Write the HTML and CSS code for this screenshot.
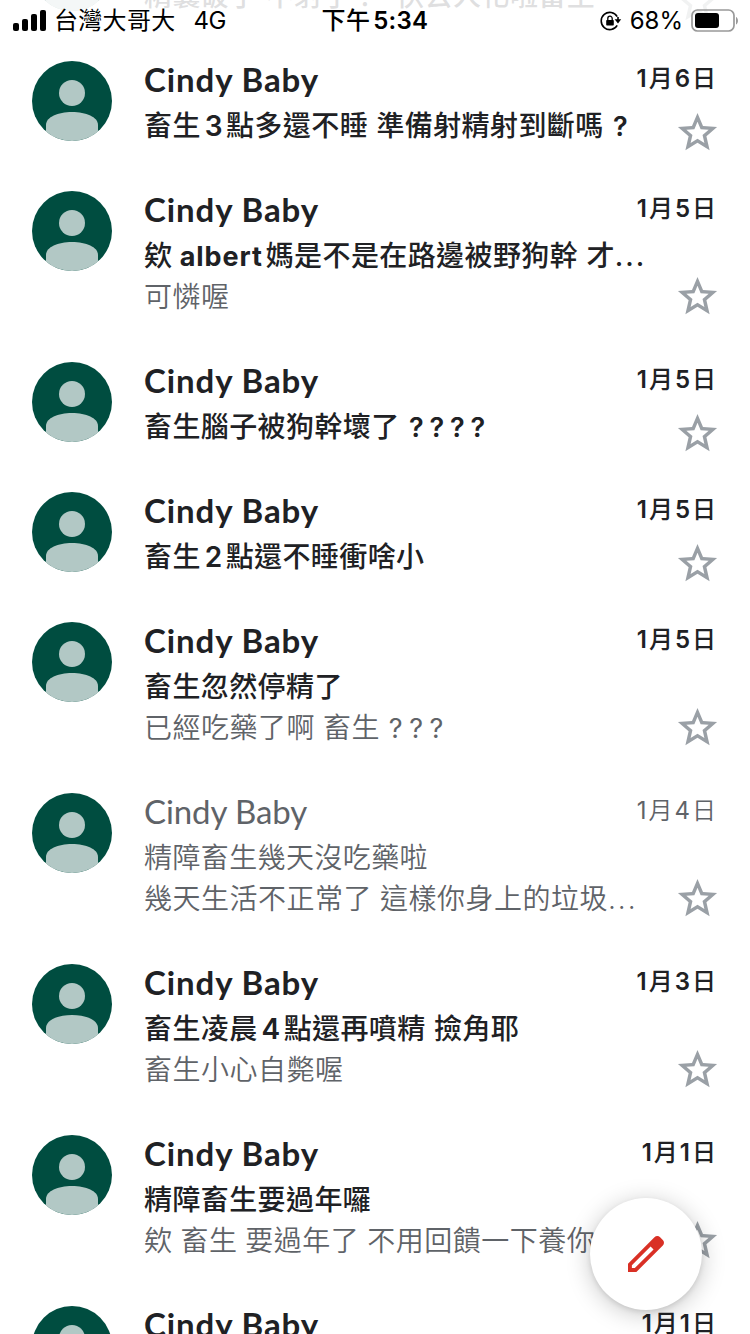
FILE: index.html
```
<!DOCTYPE html>
<html lang="zh-TW">

<head>
	<meta charset="utf-8">
	<title>收件匣</title>
	<link rel="stylesheet" href="styles.css">
</head>

<body>
	<svg width="0" height="0" class="defs">
		<symbol id="star" viewBox="0 0 24 24">
			<path fill-rule="evenodd" d="M22 9.240l-7.190-.62L12 2 9.190 8.630 2 9.240l5.460 4.730L5.820 21 12 17.270 18.180 21l-1.630-7.030zM12 6.500L13.600 10.300 17.700 10.640 14.580 13.330 15.520 17.350 12 15.200 8.480 17.350 9.420 13.330 6.300 10.640 10.400 10.300z" />
		</symbol>
		<symbol id="person" viewBox="0 0 80 80">
			<circle cx="40" cy="40" r="40" fill="#004d40" />
			<circle cx="40" cy="32" r="13" fill="#b2c8c5" />
			<path d="M14 70.400V64c0-8 12-13 26-13s26 5 26 13v6.400A40 40 0 0 1 14 70.400z" fill="#b2c8c5" />
		</symbol>
	</svg>

	<!-- 狀態列 -->
	<div class="status">
		<div class="left">
			<svg class="signal" width="34" height="22" viewBox="0 0 34 22">
				<rect x="0" y="13" width="6" height="8" rx="2" />
				<rect x="9" y="9" width="6" height="12" rx="2" />
				<rect x="18" y="4" width="6" height="17" rx="2" />
				<rect x="27" y="0" width="6" height="21" rx="2" />
			</svg>
			<span class="carrier">台灣大哥大</span>
			<span class="net">4G</span>
		</div>
		<div class="time">下午<span>5:34</span></div>
		<div class="right">
			<svg class="lock" width="22" height="20" viewBox="0 0 22 20">
				<path d="M17.200 5.600A8.600 8.600 0 1 0 17.200 14.400" fill="none" stroke="#000" stroke-width="1.600" />
				<path d="M18 6v4" stroke="#000" stroke-width="1.600" />
				<path d="M14.600 8.200h6.600L18 12.400z" />
				<rect x="6.200" y="9" width="7.600" height="5.600" rx="0.8" />
				<path d="M7.800 9.400V7.400a2.200 2.200 0 0 1 4.400 0v2" fill="none" stroke="#000" stroke-width="1.300" />
			</svg>
			<span class="percent">68%</span>
			<svg class="battery" width="48" height="24" viewBox="0 0 48 24">
				<rect x="1" y="1" width="42" height="21" rx="5.500" fill="none" stroke="#999" stroke-width="1.700" />
				<rect x="4" y="4" width="24" height="15" rx="3" />
				<path d="M45 8c2.600 1 2.600 6.500 0 7.500z" fill="#999" />
			</svg>
		</div>
	</div>

	<!-- 郵件列表 -->
	<div class="list">
		<div class="mail">
			<svg class="avatar"><use href="#person" /></svg>
			<div class="text">
				<div class="name"></div>
				<div class="subject">精囊破了 不射了？&nbsp; 快去人化啦畜生</div>
			</div>
			<div class="side">
				<div class="date"></div>
				<svg class="star"><use href="#star" /></svg>
			</div>
		</div>
		<div class="mail">
			<svg class="avatar"><use href="#person" /></svg>
			<div class="text">
				<div class="name">Cindy Baby</div>
				<div class="subject">畜生<b>3</b>點多還不睡 準備射精射到斷嗎 <b class="mark">?</b></div>
			</div>
			<div class="side">
				<div class="date"><b>1</b>月<b>6</b>日</div>
				<svg class="star"><use href="#star" /></svg>
			</div>
		</div>
		<div class="mail long">
			<svg class="avatar"><use href="#person" /></svg>
			<div class="text">
				<div class="name">Cindy Baby</div>
				<div class="subject">欸 <b class="word">albert</b>媽是不是在路邊被野狗幹 才<i>...</i></div>
				<div class="snippet">可憐喔</div>
			</div>
			<div class="side">
				<div class="date"><b>1</b>月<b>5</b>日</div>
				<svg class="star"><use href="#star" /></svg>
			</div>
		</div>
		<div class="mail">
			<svg class="avatar"><use href="#person" /></svg>
			<div class="text">
				<div class="name">Cindy Baby</div>
				<div class="subject">畜生腦子被狗幹壞了 <b class="mark">????</b></div>
			</div>
			<div class="side">
				<div class="date"><b>1</b>月<b>5</b>日</div>
				<svg class="star"><use href="#star" /></svg>
			</div>
		</div>
		<div class="mail">
			<svg class="avatar"><use href="#person" /></svg>
			<div class="text">
				<div class="name">Cindy Baby</div>
				<div class="subject">畜生<b>2</b>點還不睡衝啥小</div>
			</div>
			<div class="side">
				<div class="date"><b>1</b>月<b>5</b>日</div>
				<svg class="star"><use href="#star" /></svg>
			</div>
		</div>
		<div class="mail long">
			<svg class="avatar"><use href="#person" /></svg>
			<div class="text">
				<div class="name">Cindy Baby</div>
				<div class="subject">畜生忽然停精了</div>
				<div class="snippet">已經吃藥了啊 畜生 <b class="mark">???</b></div>
			</div>
			<div class="side">
				<div class="date"><b>1</b>月<b>5</b>日</div>
				<svg class="star"><use href="#star" /></svg>
			</div>
		</div>
		<div class="mail long read">
			<svg class="avatar"><use href="#person" /></svg>
			<div class="text">
				<div class="name">Cindy Baby</div>
				<div class="subject">精障畜生幾天沒吃藥啦</div>
				<div class="snippet">幾天生活不正常了 這樣你身上的垃圾<i>...</i></div>
			</div>
			<div class="side">
				<div class="date"><b>1</b>月<b>4</b>日</div>
				<svg class="star"><use href="#star" /></svg>
			</div>
		</div>
		<div class="mail long">
			<svg class="avatar"><use href="#person" /></svg>
			<div class="text">
				<div class="name">Cindy Baby</div>
				<div class="subject">畜生凌晨<b>4</b>點還再噴精 撿角耶</div>
				<div class="snippet">畜生小心自斃喔</div>
			</div>
			<div class="side">
				<div class="date"><b>1</b>月<b>3</b>日</div>
				<svg class="star"><use href="#star" /></svg>
			</div>
		</div>
		<div class="mail long">
			<svg class="avatar"><use href="#person" /></svg>
			<div class="text">
				<div class="name">Cindy Baby</div>
				<div class="subject">精障畜生要過年囉</div>
				<div class="snippet">欸 畜生 要過年了 不用回饋一下養你</div>
			</div>
			<div class="side">
				<div class="date"><b>1</b>月<b>1</b>日</div>
				<svg class="star"><use href="#star" /></svg>
			</div>
		</div>
		<div class="mail">
			<svg class="avatar"><use href="#person" /></svg>
			<div class="text">
				<div class="name">Cindy Baby</div>
			</div>
			<div class="side">
				<div class="date"><b>1</b>月<b>1</b>日</div>
			</div>
		</div>
	</div>

	<!-- 撰寫按鈕 -->
	<div class="compose">
		<svg width="48" height="48" viewBox="0 0 24 24">
			<path d="M20.410 4.940l-1.350-1.350c-.78-.78-2.050-.78-2.830 0L3 16.820V21h4.180L20.410 7.770c.79-.78.79-2.050 0-2.830zM6.410 19.060H4.940v-1.470L14.300 8.230l1.470 1.470z" fill="#d93025" />
		</svg>
	</div>
</body>

</html>
```
FILE: styles.css
```
* {
	box-sizing: border-box;
}

body {
	margin: 0;
	width: 750px;
	height: 1334px;
	overflow: hidden;
	position: relative;
	background: #fff;
	color: #202124;
	font-family: Inter, "Noto Sans CJK TC", sans-serif;
}

.defs {
	position: absolute;
}

/* 狀態列 */
.status {
	position: absolute;
	top: 0;
	left: 0;
	z-index: 2;
	width: 750px;
	height: 40px;
	padding: 0 11px 0 13px;
	display: grid;
	grid-template-columns: 1fr auto 1fr;
	align-items: center;
	background: rgba(255, 255, 255, 0.86);
	color: #000;
	font-size: 24px;
	line-height: 42px;
	white-space: nowrap;
}

.left,
.right {
	display: flex;
	align-items: center;
	height: 40px;
}

.right {
	justify-content: flex-end;
}

.carrier {
	margin-left: 7px;
	letter-spacing: 0.3px;
}

.net {
	margin-left: 18px;
	letter-spacing: -0.5px;
}

.time {
	padding-right: 2px;
	font-weight: 500;
	letter-spacing: 0.3px;
}

.time span {
	margin-left: 3px;
	font-weight: 600;
	letter-spacing: 0.3px;
}

.lock {
	margin-right: -1px;
}

.percent {
	margin: 0 8px 0 9px;
}

/* 郵件列表 */
.list {
	height: 1403px;
	margin-top: -69px;
	overflow: hidden;
}

.mail {
	display: flex;
	padding: 0 34px 50px 32px;
}

.avatar {
	width: 80px;
	height: 80px;
	flex: none;
}

.text {
	width: 470px;
	margin-left: 32px;
	white-space: nowrap;
	flex: none;
}

.name {
	height: 44px;
	font: 700 33px/37px Lato, sans-serif;
	letter-spacing: 0.9px;
}

.subject {
	height: 36px;
	line-height: 42px;
	font-size: 28px;
	font-weight: 500;
	letter-spacing: 0.4px;
	word-spacing: 0.5px;
}

.snippet {
	height: 41px;
	line-height: 52px;
	font-size: 28px;
	font-weight: 350;
	letter-spacing: 0.5px;
	word-spacing: -0.5px;
	color: #5f6368;
}

.subject b {
	font-size: 28px;
	font-weight: 600;
	margin: 0 3px 0 4px;
}

.subject .word {
	font-size: 27px;
	font-weight: 700;
	letter-spacing: 0.9px;
	margin: 0 3px 0 -1px;
}

.subject .mark,
.snippet .mark {
	margin: 0 0 0 1px;
	font-size: 27px;
	letter-spacing: 5.8px;
}

.snippet .mark {
	font-weight: 400;
	letter-spacing: 6.6px;
}

.subject i,
.snippet i {
	font-style: normal;
	letter-spacing: 2px;
}

.side {
	flex: 1;
	display: flex;
	flex-direction: column;
	align-items: flex-end;
	justify-content: space-between;
	white-space: nowrap;
}

.date {
	height: 35px;
	margin-right: -2px;
	font-size: 24px;
	font-weight: 500;
	line-height: 36px;
	letter-spacing: 2px;
}

.date b {
	font-weight: 600;
}

.star {
	flex: none;
	width: 47px;
	height: 47px;
	margin: 0 -5px -15px 0;
	fill: #9aa0a6;
}

.long .star {
	margin-bottom: -8px;
}

.read .name,
.read .subject,
.read .date,
.read .date b {
	font-weight: 400;
	color: #5f6368;
}

.read .name {
	letter-spacing: -0.1px;
}

.read .subject,
.read .date {
	font-weight: 350;
}

/* 撰寫按鈕 */
.compose {
	position: absolute;
	left: 590px;
	top: 1198px;
	width: 112px;
	height: 112px;
	display: flex;
	align-items: center;
	justify-content: center;
	border-radius: 50%;
	background: #fff;
	box-shadow: 0 4px 24px rgba(0, 0, 0, 0.22), 0 2px 5px rgba(0, 0, 0, 0.1);
}
```
